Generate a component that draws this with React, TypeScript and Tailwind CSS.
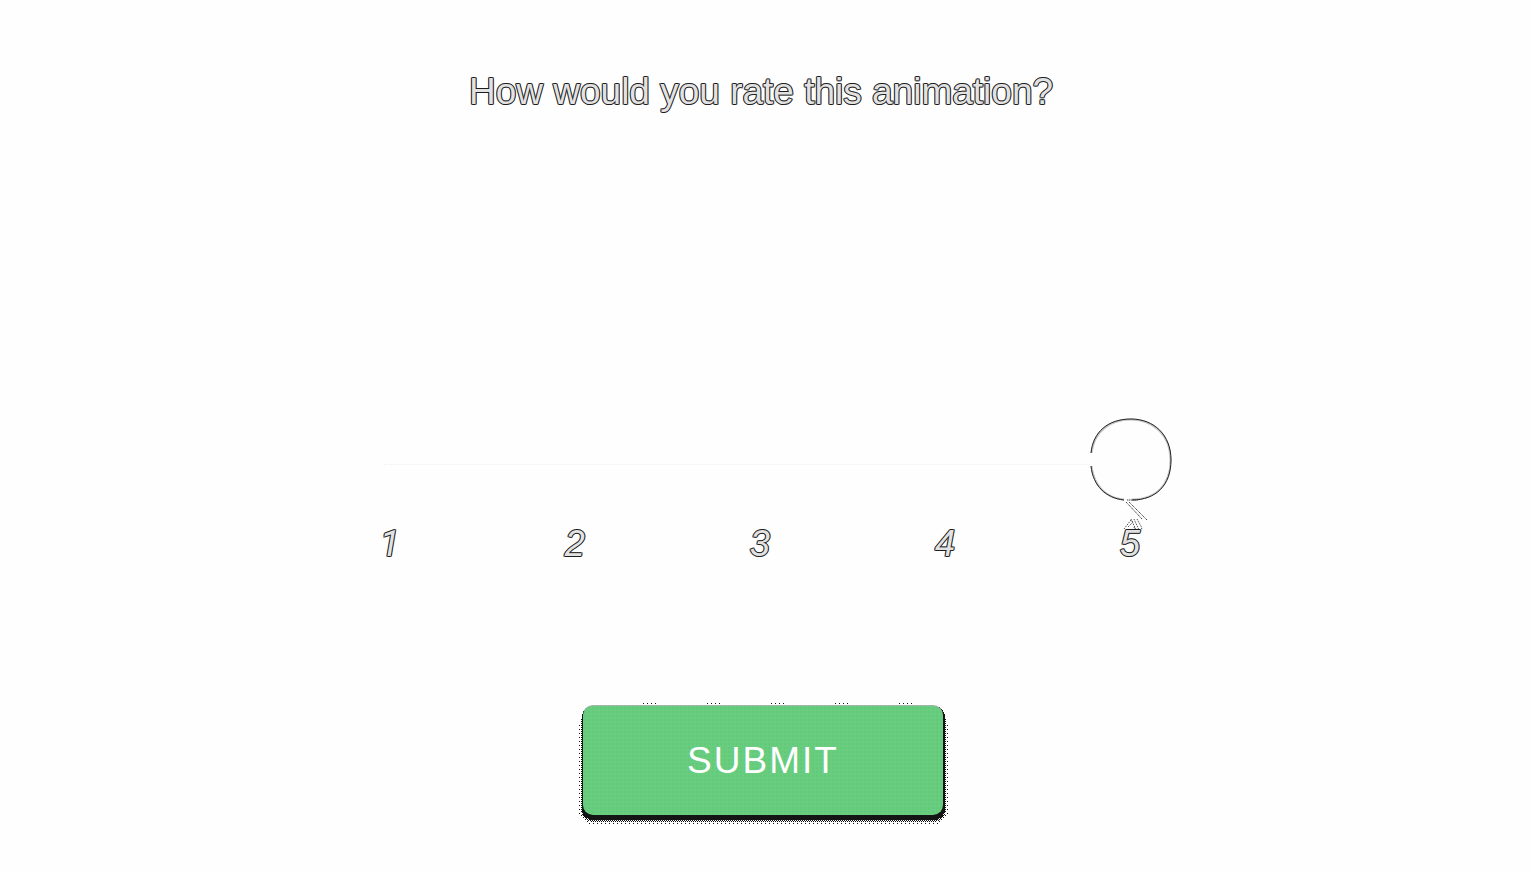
import { useState } from "react";

const scores = [1, 2, 3, 4, 5];
const outlined =
  "text-[#e2e2e2] [paint-order:stroke_fill] [-webkit-text-stroke:2px_#808080] [text-shadow:1px_0_#1c1c1c,-1px_0_#1c1c1c,0_1px_#1c1c1c,0_-1px_#1c1c1c]";

function Bubble() {
  return (
    <svg className="block h-[120px] w-[82px]" viewBox="0 0 82 120" fill="none" aria-hidden="true">
      <path
        d="M1 42C1 17 16 1 41 1S81 17 81 42 66 82 41 82 1 67 1 42Z"
        fill="#fefefe"
      />
      <path d="M1.500 35C4 14 19 1.500 41 1.500S80.500 17 80.500 42 66 81.500 42 81.500M1.500 48C4 68 16 80 34 81.500" stroke="#c4c4c4" strokeWidth="2" />
      <path d="M1 35C3 14 18 1 41 1S81 17 81 42 66 82 42 82M1 48C3 68 16 80 34 82" stroke="#222" />
      <path d="M37 82H48M36 84 52 101M39 84 57 102" stroke="#444" strokeDasharray="1.400 0.600" />
      <path
        d="M34 111 41 102 43 104 38 109M41 101 46 112M44 101 49 112M47 101 52 110 50 113M44 109 46 113H50"
        stroke="#555"
        strokeDasharray="1.500 1"
      />
    </svg>
  );
}

function ButtonFringe() {
  return (
    <svg className="absolute -top-1 -left-1 h-[124px] w-[370px]" viewBox="0 0 370 124" shapeRendering="crispEdges" aria-hidden="true">
      <defs>
        <pattern id="checker" width="2" height="2" patternUnits="userSpaceOnUse">
          <path d="M0 0h1v1H0zM1 1h1v1H1z" fill="#111" />
        </pattern>
        <pattern id="sparse" width="4" height="4" patternUnits="userSpaceOnUse">
          <path d="M0 0h1v1H0zM2 2h1v1H2z" fill="#111" />
        </pattern>
        <pattern id="ticks" x="64" width="64" height="4" patternUnits="userSpaceOnUse">
          <path d="M0 2h1v1H0zM4 2h1v1H4zM8 2h1v1H8zM12 2h1v1H12z" fill="#111" />
        </pattern>
      </defs>
      <rect x="0" y="12" width="369" height="111" rx="12" fill="url(#sparse)" />
      <rect x="2" y="8" width="365" height="113" rx="12" fill="url(#checker)" />
      <rect x="64" y="0" width="272" height="3" fill="url(#ticks)" />
      <rect x="3" y="5" width="363" height="114" rx="11" fill="#151515" />
    </svg>
  );
}

export default function App() {
  const [score, setScore] = useState(5);

  return (
    <main className="flex min-h-screen flex-col items-center bg-[#fefefe] pt-[71px] pr-1.5 font-['Liberation_Sans',Arial,sans-serif]">
      <h1 id="question" className={`pr-1 text-[37px] leading-[42px] ${outlined}`}>
        How would you rate this animation?
      </h1>

      <form className="flex w-full flex-col items-center" onSubmit={(e) => e.preventDefault()}>
        <div className="relative mt-[305px] w-[818px]">
          <div className="relative h-[84px]">
            <span className="absolute top-[46px] right-20 left-[30px] border-t border-dotted border-[#f1f1f1]" />
            <div className="absolute inset-y-0 right-[82px] left-0">
              <div className="absolute top-0" style={{ left: `${(score - 1) * 25}%` }}>
                <Bubble />
              </div>
            </div>
            <input
              type="range"
              min={1}
              max={5}
              step={1}
              value={score}
              aria-labelledby="question"
              onChange={(e) => setScore(Number(e.target.value))}
              className="relative block h-[84px] w-full cursor-pointer appearance-none bg-transparent outline-none [&::-webkit-slider-thumb]:h-[82px] [&::-webkit-slider-thumb]:w-[82px] [&::-webkit-slider-thumb]:appearance-none [&::-webkit-slider-thumb]:rounded-full [&::-webkit-slider-thumb]:bg-transparent"
            />
          </div>
          <ol className={`relative mt-[21px] flex justify-between pr-8 pl-[26px] text-[36px] leading-[42px] italic ${outlined}`}>
            {scores.map((n) => (
              <li key={n} className="first:font-['Roboto']">
                {n}
              </li>
            ))}
          </ol>
        </div>
        <div className="relative mt-[140px] w-[360px]">
          <ButtonFringe />
          <button
            type="submit"
            className="relative block h-[110px] w-full rounded-[10px] border-t border-[#a3b5a8] bg-[#68cd7e] bg-[radial-gradient(#63c97a_1px,transparent_1px)] bg-[size:4px_4px] text-[37px] tracking-[2px] text-white"
          >
            SUBMIT
          </button>
        </div>
      </form>
    </main>
  );
}
